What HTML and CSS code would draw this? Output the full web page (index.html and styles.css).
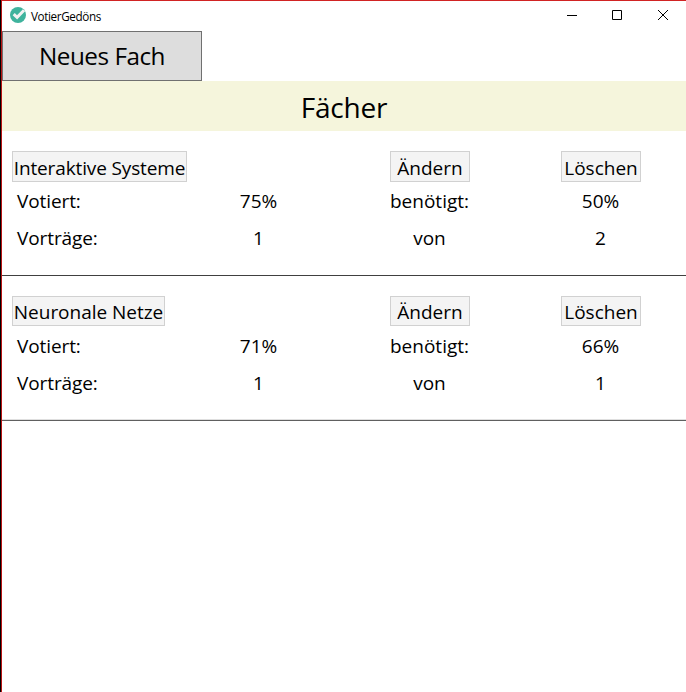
FILE: index.html
```html
<!DOCTYPE html>
<html lang="de">
<head>
<meta charset="utf-8">
<title>VotierGedöns</title>
<link rel="stylesheet" href="styles.css">
</head>
<body>
<div class="window">
  <header class="titlebar">
    <svg class="logo" width="16" height="16" viewBox="0 0 16 16"><circle cx="8" cy="8" r="8" fill="#3fb39d"/><path d="M3.7 7.1 7.1 10.4 14 3.3" fill="none" stroke="#f2f2f2" stroke-width="3"/></svg>
    <span class="app-name">VotierGedöns</span>
    <div class="controls">
      <svg width="10" height="10" viewBox="0 0 10 10"><path d="M0 5.5H10" stroke="#000"/></svg>
      <svg width="10" height="10" viewBox="0 0 10 10"><path d="M.5.5H9.5V9.5H.5Z" fill="none" stroke="#000"/></svg>
      <svg class="close" width="10" height="10" viewBox="0 0 10 10"><path d="M0 0 10 10M10 0 0 10" stroke="#000"/></svg>
    </div>
  </header>
  <button class="new-subject">Neues Fach</button>
  <h1 class="heading">Fächer</h1>
  <section class="subject">
    <div class="actions">
      <button class="btn name systems">Interaktive Systeme</button>
      <button class="btn edit">Ändern</button>
      <button class="btn delete">Löschen</button>
    </div>
    <div class="row"><span class="label">Votiert:</span><span>75%</span><span>benötigt:</span><span>50%</span></div>
    <div class="row"><span class="label">Vorträge:</span><span>1</span><span>von</span><span>2</span></div>
  </section>
  <section class="subject second">
    <div class="actions">
      <button class="btn name networks">Neuronale Netze</button>
      <button class="btn edit">Ändern</button>
      <button class="btn delete">Löschen</button>
    </div>
    <div class="row"><span class="label">Votiert:</span><span>71%</span><span>benötigt:</span><span>66%</span></div>
    <div class="row"><span class="label">Vorträge:</span><span>1</span><span>von</span><span>1</span></div>
  </section>
</div>
</body>
</html>
```
FILE: styles.css
```css
* { box-sizing: border-box; }
body {
  margin: 0;
  background: #000;
  color: #000;
  font-family: "Open Sans", "Noto Sans", sans-serif;
}
.window {
  height: 692px;
  margin-left: 1px;
  border-top: 1px solid #d12323;
  border-left: 1px solid #b81414;
  background: #fff;
  overflow: hidden;
}
.titlebar {
  display: flex;
  align-items: center;
  height: 30px;
  padding: 0 18px 2px 8px;
}
.app-name {
  margin-left: 5px;
  font-size: 11.7px;
  line-height: 16px;
  letter-spacing: -0.38px;
  padding-top: 2px;
}
.controls {
  display: flex;
  gap: 35px;
  margin-left: auto;
}
.close { margin-left: 1px; }
button {
  display: block;
  padding: 0;
  border-radius: 0;
  font-family: inherit;
  color: #000;
  white-space: nowrap;
}
.new-subject {
  width: 200px;
  height: 50px;
  border: 1px solid #707070;
  background: #ddd;
  font-size: 24.3px;
  line-height: 48px;
  letter-spacing: -0.5px;
}
.heading {
  height: 50px;
  margin: 0;
  background: #f5f5dc;
  font-size: 28px;
  font-weight: 400;
  line-height: 52px;
  letter-spacing: -0.2px;
  text-align: center;
}
.subject {
  height: 145px;
  padding-top: 20px;
  border-bottom: 1px solid #404040;
  font-size: 19px;
}
.second { border-bottom-color: #606060; box-shadow: inset 0 -1px #dfdfdf; }
.actions, .row {
  display: grid;
  grid-template-columns: repeat(4, 171px);
}
.actions { height: 31px; }
.btn {
  width: 80px;
  height: 31px;
  justify-self: center;
  border: 1px solid #d1d1d1;
  background: #f4f4f4;
  font-size: 19px;
  line-height: 29px;
  padding-top: 2px;
}
.second .btn { height: 30px; line-height: 28px; padding-top: 1px; }
.edit, .delete { padding-left: 1px; }
.name {
  grid-column: 1 / 3;
  justify-self: start;
  margin-left: 10px;
}
.systems { width: 175px; letter-spacing: -0.13px; }
.networks { width: 153px; letter-spacing: -0.03px; }
.row {
  height: 37px;
  line-height: 39px;
  text-align: center;
  letter-spacing: 0;
}
.label { padding-left: 15px; text-align: left; letter-spacing: -0.1px; }
```
